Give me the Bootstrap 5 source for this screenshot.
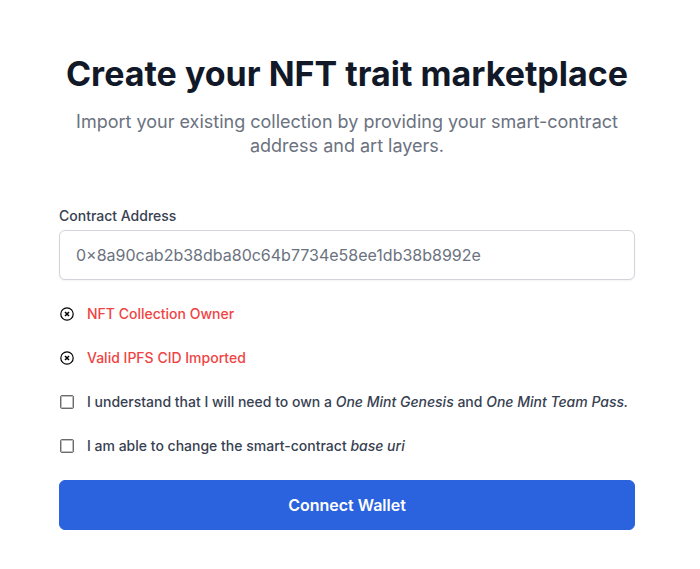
<!DOCTYPE html>
<html lang="en">
<head>
<meta charset="utf-8">
<meta name="viewport" content="width=device-width, initial-scale=1">
<title>Create your NFT trait marketplace</title>
<link rel="stylesheet" href="https://cdn.jsdelivr.net/npm/bootstrap@5.3.0/dist/css/bootstrap.min.css">
<style>
body { font-family: Inter, sans-serif; color: #374151; background: #fff; }
.page { max-width: 700px; padding: 50px 65px 40px 59px; }
.hero-title { font-size: 34px; line-height: 48px; font-weight: 700; color: #111827; }
.hero-text { margin-top: 12px; font-size: 18px; line-height: 24px; color: #6b7280; }
.setup-form { margin-top: 48px; font-size: 14px; line-height: 20px; font-weight: 500; }
.address { height: 50px; padding: 0 16px; border-color: #d1d5db; border-radius: 6px; font-size: 16px; color: #6b7280; box-shadow: 0 1px 2px rgba(0, 0, 0, .05); }
.address::placeholder { color: #6b7280; }
.checks { gap: 24px; margin: 24px 0; }
.check-row { gap: 12px; }
.check-row svg { width: 16px; height: 16px; flex: none; color: #000; }
.failed { color: #ef4444; }
.tick { width: 14px; height: 14px; margin: 0 1px; border: 1px solid #6b6b6b; border-radius: 2px; box-shadow: inset 0 0 0 1px rgba(0, 0, 0, .25); flex: none; }
.form-check-input.tick[type=checkbox] { border-radius: 2px; }
.connect { height: 50px; background: #2b63de; border-color: #2b63de; border-radius: 6px; font-size: 16px; font-weight: 600; }
</style>
<script src="https://cdn.jsdelivr.net/npm/bootstrap@5.3.0/dist/js/bootstrap.bundle.min.js"></script>
</head>
<body>
<main class="page mx-auto">
  <header class="text-center">
    <h1 class="hero-title mb-0">Create your NFT trait marketplace</h1>
    <p class="hero-text mb-0">Import your existing collection by providing your smart-contract address and art layers.</p>
  </header>
  <form class="setup-form">
    <label for="address" class="d-block mb-1">Contract Address</label>
    <input id="address" type="text" class="form-control address" placeholder="0×8a90cab2b38dba80c64b7734e58ee1db38b8992e">
    <div class="checks d-flex flex-column">
      <div class="check-row d-flex align-items-center failed"><svg viewBox="0 0 16 16" fill="none" stroke="currentColor" aria-hidden="true"><circle cx="8" cy="8" r="6.2" stroke-width="1.2"/><path d="M6 6l4 4M10 6l-4 4" stroke-width="1.5"/></svg><span>NFT Collection Owner</span></div>
      <div class="check-row d-flex align-items-center failed"><svg viewBox="0 0 16 16" fill="none" stroke="currentColor" aria-hidden="true"><circle cx="8" cy="8" r="6.2" stroke-width="1.2"/><path d="M6 6l4 4M10 6l-4 4" stroke-width="1.5"/></svg><span>Valid IPFS CID Imported</span></div>
      <div class="check-row d-flex align-items-center"><input class="form-check-input tick" type="checkbox" id="own"><label for="own">I understand that I will need to own a <em>One Mint Genesis</em> and <em>One Mint Team Pass.</em></label></div>
      <div class="check-row d-flex align-items-center"><input class="form-check-input tick" type="checkbox" id="uri"><label for="uri">I am able to change the smart-contract <em>base uri</em></label></div>
    </div>
    <button type="button" class="btn btn-primary connect w-100">Connect Wallet</button>
  </form>
</main>
</body>
</html>
